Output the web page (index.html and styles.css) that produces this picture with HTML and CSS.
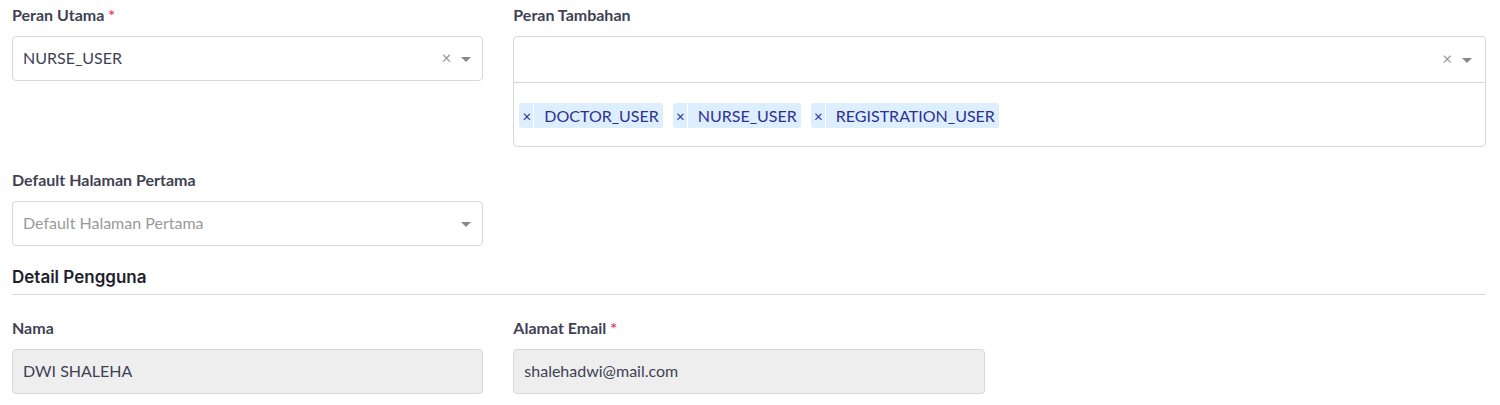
FILE: index.html
```html
<!DOCTYPE html>
<html>
<head>
<meta charset="utf-8">
<link rel="stylesheet" href="styles.css">
</head>
<body>
<div class="form">
  <div class="grid top">
    <div class="field">
      <label class="label">Peran Utama <span class="req">*</span></label>
      <div class="select">
        <span class="value">NURSE_USER</span>
        <span class="clear">×</span>
        <span class="caret"></span>
      </div>
    </div>
    <div class="field span2">
      <label class="label">Peran Tambahan</label>
      <div class="multi">
        <div class="multi-bar">
          <span class="clear">×</span>
          <span class="caret"></span>
        </div>
        <div class="multi-tags">
          <span class="tag"><span class="tag-x">×</span><span class="tag-text">DOCTOR_USER</span></span>
          <span class="tag"><span class="tag-x">×</span><span class="tag-text">NURSE_USER</span></span>
          <span class="tag"><span class="tag-x">×</span><span class="tag-text">REGISTRATION_USER</span></span>
        </div>
      </div>
    </div>
    <div class="field">
      <label class="label">Default Halaman Pertama</label>
      <div class="select">
        <span class="value placeholder">Default Halaman Pertama</span>
        <span class="caret"></span>
      </div>
    </div>
  </div>
  <h3 class="section">Detail Pengguna</h3>
  <div class="grid bottom">
    <div class="field">
      <label class="label">Nama</label>
      <div class="input disabled">DWI SHALEHA</div>
    </div>
    <div class="field">
      <label class="label">Alamat Email <span class="req">*</span></label>
      <div class="input disabled">shalehadwi@mail.com</div>
    </div>
  </div>
</div>
</body>
</html>
```

FILE: styles.css
```css
* { box-sizing: border-box; }
html, body { margin: 0; padding: 0; background: #fff; }
body { font-family: Lato, "Liberation Sans", sans-serif; color: #3f4254; }
.form { padding: 0 14px 0 12px; }
.grid {
  display: grid;
  grid-template-columns: 1fr 1fr 1fr;
  column-gap: 30px;
  row-gap: 23px;
}
.top { padding-top: 5px; }
.bottom { margin-top: 23px; }
.span2 { grid-column: span 2; }
.field { display: flex; flex-direction: column; }
.label {
  font-size: 16px;
  font-weight: 700;
  color: #3f4254;
  line-height: 20px;
  margin-bottom: 11px;
}
.req { color: #f1416c; }
.select {
  height: 45px;
  border: 1px solid #d8d8d8;
  border-radius: 4px;
  display: flex;
  align-items: center;
  padding: 0 11px 2px 10px;
  font-size: 16px;
  color: #3f4254;
}
.value { flex: 1; }
.placeholder { color: #9a9a9a; }
.clear {
  color: #9a9a9a;
  font-size: 17px;
  margin-right: 10px;
  line-height: 1;
}
.caret {
  width: 0; height: 0;
  border-left: 5px solid transparent;
  border-right: 5px solid transparent;
  border-top: 5px solid #888;
  margin-top: 3px;
}
.multi {
  border: 1px solid #d8d8d8;
  border-radius: 4px;
}
.multi-bar {
  height: 46px;
  border-bottom: 1px solid #d8d8d8;
  display: flex;
  align-items: center;
  justify-content: flex-end;
  padding: 0 13px 2px 10px;
}
.multi-tags {
  height: 63px;
  display: flex;
  align-items: center;
  gap: 10px;
  padding: 2px 5px 0;
}
.tag {
  display: flex;
  align-items: stretch;
  height: 25px;
  background: #ddeeff;
  border-radius: 3px;
  color: #2e3192;
  font-size: 16px;
}
.tag-x {
  width: 15px;
  display: flex;
  align-items: center;
  justify-content: center;
  font-size: 15px;
  border-right: 1px solid #fff;
  padding-left: 1px;
}
.tag-text {
  display: flex;
  align-items: center;
  padding: 0 4px 0 10px;
}
.section {
  font-family: Inter, "Open Sans", sans-serif;
  font-weight: 600;
  font-size: 17px;
  color: #1e1e2d;
  margin: 20px 0 0;
  padding: 1px 0 7px;
  border-bottom: 1px solid #d8d8d8;
  line-height: 20px;
}
.input {
  height: 45px;
  border: 1px solid #d8d8d8;
  border-radius: 4px;
  display: flex;
  align-items: center;
  padding: 0 10px 2px;
  font-size: 16px;
  color: #3f4254;
}
.disabled { background: #eeeeee; }
```
